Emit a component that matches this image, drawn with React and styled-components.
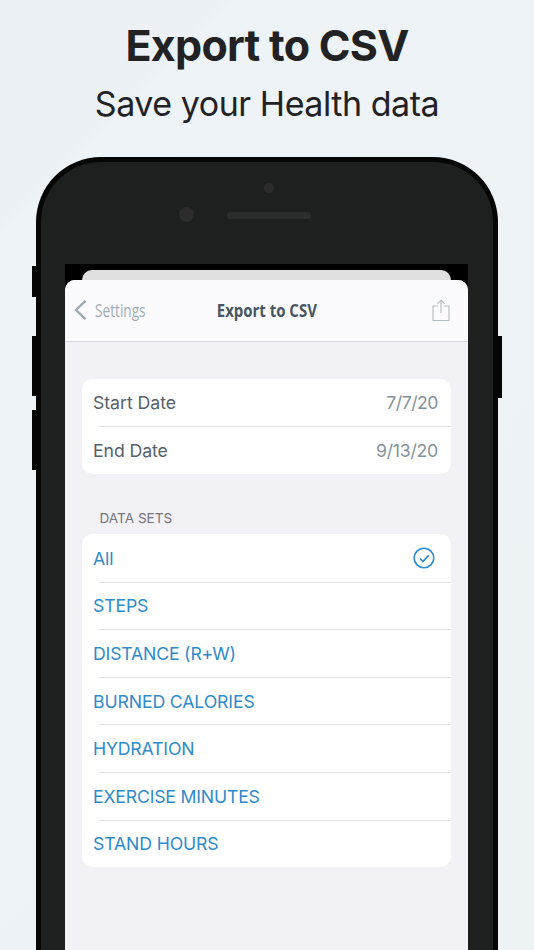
import React from 'react';
import styled, {createGlobalStyle} from 'styled-components';

const GlobalStyle = createGlobalStyle`
    * {
        box-sizing: border-box;
    }
    body {
        margin: 0;
        font-family: Inter, "Liberation Sans", sans-serif;
    }
`;

const Page = styled.main`
    width: 534px;
    height: 950px;
    overflow: hidden;
    display: flex;
    flex-direction: column;
    align-items: center;
    background: linear-gradient(135deg, #eaf0f4 0%, #ebf1f4 15%, #edf3f6 16%, #edf2f5 100%);
`;

const Heading = styled.header`
    width: 100%;
    height: 157px;
    flex: none;
    padding-top: 19px;
    display: flex;
    flex-direction: column;
    align-items: center;
    color: #222224;
    white-space: nowrap;
`;

const Title = styled.h1`
    margin: 0;
    font-size: 43px;
    line-height: 52px;
    font-weight: 700;
    letter-spacing: -0.75px;
`;

const Subtitle = styled.p`
    margin: 12px 0 0;
    font-size: 34px;
    line-height: 42px;
    font-weight: 400;
    letter-spacing: -0.45px;
`;

const Device = styled.div`
    flex: 1;
    display: flex;
    align-items: stretch;
`;

const Keys = styled.div`
    width: 4px;
    padding-top: ${({top}) => top}px;
    display: flex;
    flex-direction: column;
`;

const Key = styled.div`
    height: ${({size}) => size}px;
    margin-bottom: ${({gap}) => gap || 0}px;
    background: #060606;
`;

const Body = styled.div`
    width: 462px;
    border: 5px solid #060607;
    border-bottom: 0;
    border-radius: 65px 65px 0 0;
    background: #1e201f;
    display: flex;
    flex-direction: column;
    align-items: center;
`;

const Forehead = styled.div`
    width: 100%;
    height: 102px;
    flex: none;
    padding-top: 21px;
    display: flex;
    flex-direction: column;
    align-items: center;
    gap: 14px;
`;

const Sensor = styled.div`
    width: 10px;
    height: 10px;
    margin-left: 4px;
    border-radius: 50%;
    background: #2d2c2d;
`;

const SpeakerRow = styled.div`
    width: 100%;
    padding-left: 138px;
    display: flex;
    align-items: center;
    gap: 33px;
`;

const Camera = styled.div`
    width: 15px;
    height: 15px;
    border-radius: 50%;
    background: #2d2c2d;
`;

const Speaker = styled.div`
    width: 84px;
    height: 7px;
    margin-top: 2px;
    border-radius: 4px;
    background: #2d2c2d;
`;

const Screen = styled.div`
    width: 403px;
    flex: 1;
    margin-right: 1px;
    padding-top: 5.5px;
    display: flex;
    flex-direction: column;
    align-items: center;
    background: #000;
`;

const BackCard = styled.div`
    width: 369px;
    height: 22px;
    flex: none;
    border-radius: 10px 10px 0 0;
    background: #e0e0e0;
`;

const Sheet = styled.section`
    width: 100%;
    flex: 1;
    margin-top: -11.5px;
    border-radius: 10px 10px 0 0;
    overflow: hidden;
    background: #f2f1f6;
`;

const NavBar = styled.nav`
    height: 61.5px;
    padding: 0 18px 0 9px;
    display: grid;
    grid-template-columns: 1fr auto 1fr;
    align-items: center;
    background: #fbfbfd;
    border-bottom: 1px solid #d9d9dd;
    font-family: "Open Sans", "Noto Sans", sans-serif;
    white-space: nowrap;
`;

const Back = styled.div`
    display: flex;
    align-items: center;
    gap: 8px;
    color: #9eabb4;
`;

const BackLabel = styled.span`
    padding-top: 2px;
    font-size: 17.3px;
    line-height: 24px;
    transform: scaleX(0.79);
    transform-origin: left center;
`;

const NavTitle = styled.h2`
    width: 100px;
    margin: 0 0 0 9px;
    display: flex;
    justify-content: center;
    font-size: 17.6px;
    line-height: 24px;
    font-weight: 700;
    color: #465662;

    span {
        transform: scaleX(0.85);
    }
`;

const Share = styled.div`
    display: flex;
    justify-content: flex-end;
    color: #b4bbc2;
`;

const Content = styled.div`
    padding: 37px 17px 0;
`;

const Group = styled.ul`
    margin: 0;
    padding: 0;
    list-style: none;
    border-radius: 10.5px;
    background: #fff;
    overflow: hidden;
`;

const Row = styled.li`
    height: 47.6px;
    padding: 1px 13px 0 11px;
    display: flex;
    align-items: center;
    justify-content: space-between;
    font-size: 17.7px;
    letter-spacing: ${({track}) => track || 0}px;
    color: ${({link}) => (link ? '#2f8bc9' : '#56616b')};
    background: linear-gradient(#e3e3e6, #e3e3e6) 17px 0 / 100% 1px no-repeat;

    &:first-child {
        background: none;
    }
`;

const Value = styled.span`
    letter-spacing: ${({track}) => track || 0}px;
    color: #84929a;
`;

const SectionLabel = styled.h3`
    margin: 36.7px 0 6.7px 17.5px;
    font-size: 13.6px;
    line-height: 17px;
    font-weight: 400;
    letter-spacing: 0;
    color: #77767c;
`;

const CheckIcon = styled.svg`
    margin-right: 3.5px;
`;

const dates = [
  {label: 'Start Date', value: '7/7/20', track: -0.05, valueTrack: -0.5},
  {label: 'End Date', value: '9/13/20', track: -0.1, valueTrack: -0.25},
];

const dataSets = [
  {label: 'All', track: -0.1, selected: true},
  {label: 'STEPS', track: -0.15},
  {label: 'DISTANCE (R+W)', track: -0.19},
  {label: 'BURNED CALORIES', track: -0.14},
  {label: 'HYDRATION', track: -0.18},
  {label: 'EXERCISE MINUTES', track: -0.2},
  {label: 'STAND HOURS', track: -0.14},
];

const ChevronLeft = () => (
  <svg width="13" height="22" viewBox="0 0 13 22" fill="none">
    <path d="M11.5 1.8 2 11l9.5 9.2" stroke="currentColor" strokeWidth="2.4"/>
  </svg>
);

const ShareIcon = () => (
  <svg width="18" height="23" viewBox="0 0 18 23" fill="none">
    <path
      d="M6 7H1v14.5h16V7h-5M9 14V1.2M5.2 4.8 9 1.2l3.800 3.600"
      stroke="currentColor"
      strokeWidth="1.1"
    />
  </svg>
);

const Check = () => (
  <CheckIcon width="22" height="22" viewBox="0 0 22 22" fill="none">
    <circle cx="11" cy="11" r="9.8" stroke="currentColor" strokeWidth="1.6"/>
    <path
      d="m6.900 11.500 3 3.100 5.800-6.300"
      stroke="currentColor"
      strokeWidth="1.7"
    />
  </CheckIcon>
);

const App = () => {
  return (
    <Page>
      <GlobalStyle/>
      <Heading>
        <Title>Export to CSV</Title>
        <Subtitle>Save your Health data</Subtitle>
      </Heading>
      <Device>
        <Keys top={109}>
          <Key size={31} gap={39}/>
          <Key size={60} gap={14}/>
          <Key size={60}/>
        </Keys>
        <Body>
          <Forehead>
            <Sensor/>
            <SpeakerRow>
              <Camera/>
              <Speaker/>
            </SpeakerRow>
          </Forehead>
          <Screen>
            <BackCard/>
            <Sheet>
              <NavBar>
                <Back>
                  <ChevronLeft/>
                  <BackLabel>Settings</BackLabel>
                </Back>
                <NavTitle><span>Export to CSV</span></NavTitle>
                <Share>
                  <ShareIcon/>
                </Share>
              </NavBar>
              <Content>
                <Group>
                  {dates.map((item) => (
                    <Row key={item.label} track={item.track}>
                      {item.label}
                      <Value track={item.valueTrack}>{item.value}</Value>
                    </Row>
                  ))}
                </Group>
                <SectionLabel>DATA SETS</SectionLabel>
                <Group>
                  {dataSets.map((item) => (
                    <Row key={item.label} track={item.track} link>
                      {item.label}
                      {item.selected ? <Check/> : null}
                    </Row>
                  ))}
                </Group>
              </Content>
            </Sheet>
          </Screen>
        </Body>
        <Keys top={179}>
          <Key size={62}/>
        </Keys>
      </Device>
    </Page>
  );
};

export default App;
